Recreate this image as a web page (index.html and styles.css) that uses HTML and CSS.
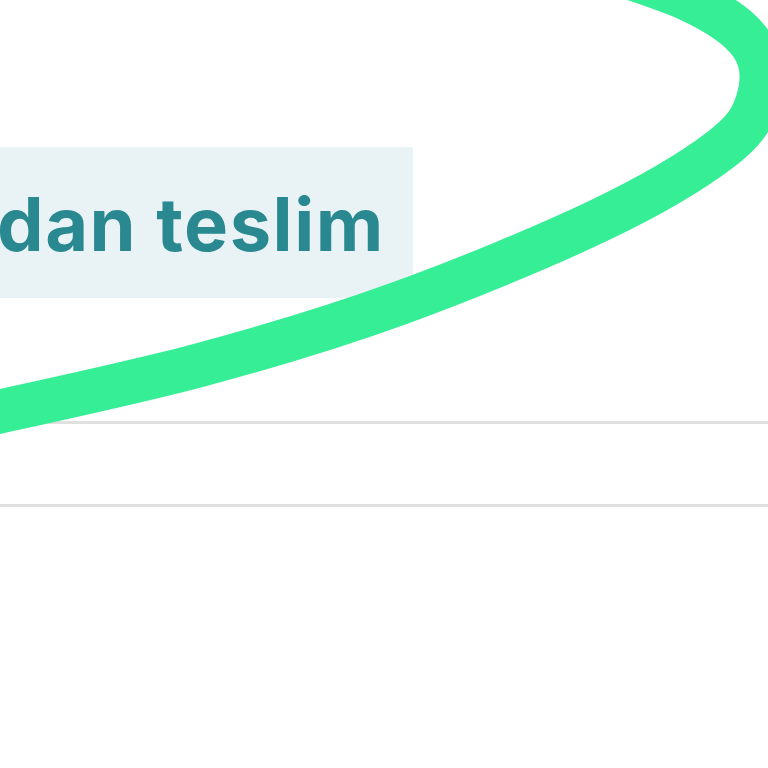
FILE: index.html
```html
<!DOCTYPE html>
<html>
<head>
<meta charset="utf-8">
<link rel="stylesheet" href="styles.css">
</head>
<body>
<main class="page">
  <div class="highlight"><span class="phrase">dan teslim</span></div>
  <div class="divider-row"></div>
</main>
<svg class="scribble" width="768" height="768" viewBox="0 0 768 768" aria-hidden="true">
  <path d="M 560 -45 C 581.7 -37.5, 658 -15, 690 0 C 722 15, 740.7 28.3, 752 45 C 763.3 61.7, 763.3 82.5, 758 100 C 752.7 117.5, 746.3 130, 720 150 C 693.7 170, 653.3 194.5, 600 220 C 546.7 245.5, 466.7 278.8, 400 303 C 333.3 327.2, 270 346.2, 200 365 C 130 383.8, 16.7 407.5, -20 416" />
</svg>
</body>
</html>
```
FILE: styles.css
```css
html, body {
  margin: 0;
  padding: 0;
  background: #ffffff;
  width: 768px;
  height: 768px;
  overflow: hidden;
}
.page {
  padding-top: 147px;
  font-family: Inter, "Noto Sans", sans-serif;
}
.highlight {
  width: 413px;
  height: 151px;
  background: #e9f3f6;
  overflow: hidden;
  display: flex;
  align-items: center;
}
.phrase {
  margin-left: -3px;
  margin-top: 2px;
  font-size: 74px;
  font-weight: 700;
  letter-spacing: 1.5px;
  color: #2a8891;
  white-space: nowrap;
  line-height: 1;
}
.divider-row {
  margin-top: 123px;
  height: 80px;
  border-top: 3px solid #e0e0e0;
  border-bottom: 3px solid #e0e0e0;
}
.scribble {
  position: absolute;
  left: 0;
  top: 0;
  pointer-events: none;
}
.scribble path {
  fill: none;
  stroke: #36ee96;
  stroke-width: 44;
  stroke-linecap: round;
}
```
